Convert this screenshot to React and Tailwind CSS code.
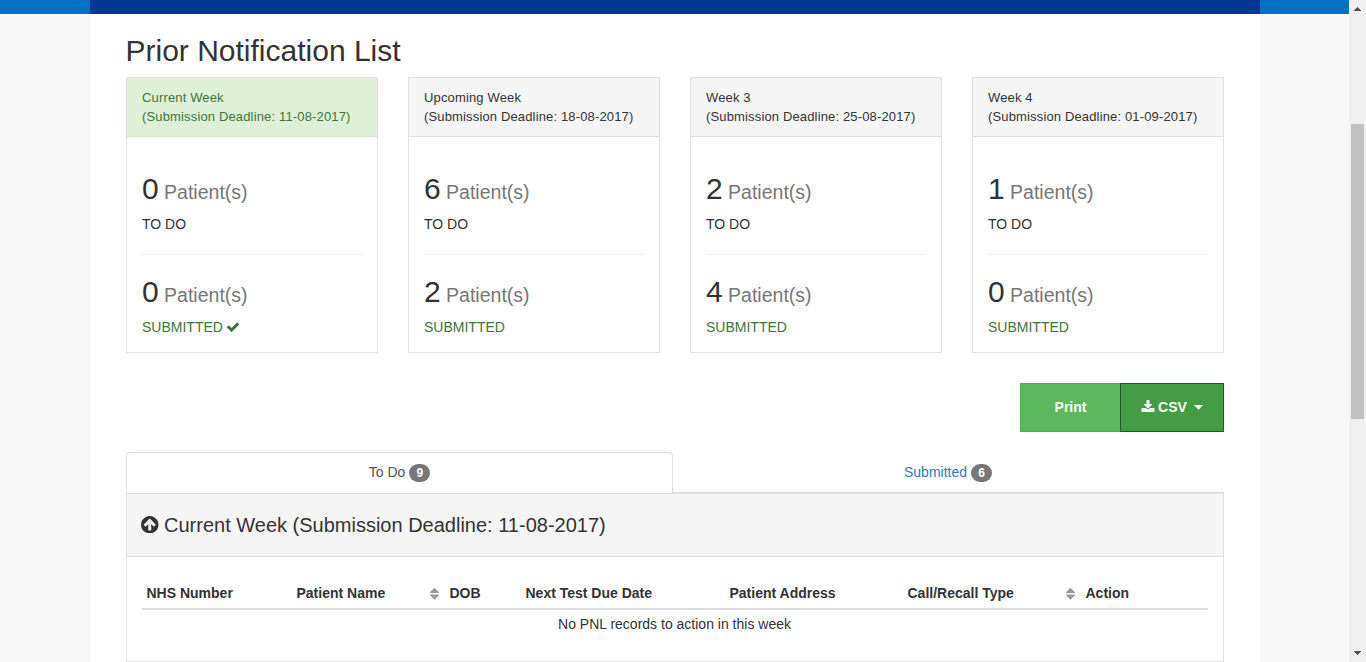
import React from "react";

const weeks = [
  { title: "Current Week", deadline: "11-08-2017", todo: 0, submitted: 0, current: true },
  { title: "Upcoming Week", deadline: "18-08-2017", todo: 6, submitted: 2 },
  { title: "Week 3", deadline: "25-08-2017", todo: 2, submitted: 4 },
  { title: "Week 4", deadline: "01-09-2017", todo: 1, submitted: 0 },
];

function CheckIcon() {
  return (
    <svg className="-ml-[0.5px] size-[14px]" viewBox="0 0 1792 1792" fill="currentColor">
      <path d="M1671 566q0 40-28 68l-724 724-136 136q-28 28-68 28t-68-28l-136-136-362-362q-28-28-28-68t28-68l136-136q28-28 68-28t68 28l294 295 656-657q28-28 68-28t68 28l136 136q28 28 28 68z" />
    </svg>
  );
}

function DownloadIcon() {
  return (
    <svg className="mr-[3px] size-[14px]" viewBox="0 0 1792 1792" fill="currentColor">
      <path d="M1344 1344q0-26-19-45t-45-19-45 19-19 45 19 45 45 19 45-19 19-45zm256 0q0-26-19-45t-45-19-45 19-19 45 19 45 45 19 45-19 19-45zm128-224v320q0 40-28 68t-68 28h-1472q-40 0-68-28t-28-68v-320q0-40 28-68t68-28h465l135 136q58 56 136 56t136-56l136-136h464q40 0 68 28t28 68zm-325-569q17 41-14 70l-448 448q-18 19-45 19t-45-19l-448-448q-31-29-14-70 17-39 59-39h256v-448q0-26 19-45t45-19h256q26 0 45 19t19 45v448h256q42 0 59 39z" />
    </svg>
  );
}

function ArrowCircleUpIcon() {
  return (
    <svg className="-ml-[0.75px] mr-[5.25px] size-[17.5px]" viewBox="128 128 1536 1536" fill="currentColor">
      <path d="M1412 895q0-27-18-45l-362-362-91-91q-18-18-45-18t-45 18l-91 91-362 362q-18 18-18 45t18 45l91 91q18 18 45 18t45-18l189-189v502q0 26 19 45t45 19h128q26 0 45-19t19-45v-502l189 189q19 19 45 19t45-19l91-91q18-18 18-45zm252 1q0 209-103 385.5t-279.5 279.5-385.5 103-385.5-103-279.5-279.5-103-385.5 103-385.5 279.5-279.5 385.5-103 385.5 103 279.5 279.5 103 385.5z" />
    </svg>
  );
}

function SortIcon() {
  return (
    <svg className="mr-[11px] h-[13px] w-[9px]" viewBox="0 0 9 13" fill="#999">
      <path d="M4.5 .8 9 5.3V6H0V5.3ZM0 7.5H9V8.3L4.5 12.8 0 8.3Z" />
    </svg>
  );
}

function Count({ value }) {
  return (
    <h2 className="h-8 text-[30px] leading-[33px] whitespace-pre">
      {value}
      <small className="text-[19.5px] text-[#777]"> Patient(s)</small>
    </h2>
  );
}

function WeekCard({ week }) {
  return (
    <section className="border border-[#e1e1e1]">
      <header
        className={
          week.current
            ? "h-[59px] border-b border-[#d0e9c6] bg-[#dff0d8] px-[15px] py-[10px] text-[13px] leading-[19px] tracking-[0.15px] text-[#3c763d]"
            : "h-[59px] border-b border-[#ddd] bg-[#f5f5f5] px-[15px] py-[10px] text-[13px] leading-[19px] tracking-[0.15px]"
        }
      >
        <div>{week.title}</div>
        <div className="whitespace-nowrap">(Submission Deadline: {week.deadline})</div>
      </header>
      <div className="px-[15px] pt-[35px] pb-[15px]">
        <Count value={week.todo} />
        <p className="mt-[10px] leading-5">TO DO</p>
        <hr className="my-5 border-t border-[#eee]" />
        <Count value={week.submitted} />
        <p className="mt-[10px] flex items-center gap-1 leading-5 text-[#3c763d]">
          SUBMITTED
          {week.current && <CheckIcon />}
        </p>
      </div>
    </section>
  );
}

function Badge({ value }) {
  return (
    <span className="mt-[2px] h-[18px] w-[21px] rounded-full bg-[#777] text-center text-xs leading-[18px] font-bold text-white">
      {value}
    </span>
  );
}

const columns = [
  { label: "NHS Number", width: "w-[150px]" },
  { label: "Patient Name", width: "w-[153px]", sort: true },
  { label: "DOB", width: "w-[76px]" },
  { label: "Next Test Due Date", width: "w-[204px]" },
  { label: "Patient Address", width: "w-[178px]" },
  { label: "Call/Recall Type", width: "w-[178px]", sort: true },
  { label: "Action", width: "flex-1" },
];

function Scrollbar() {
  return (
    <div className="flex w-[17px] flex-col items-center bg-[#f0f0f0]">
      <svg className="mt-[7px] h-1 w-[7px]" viewBox="0 0 7 4" fill="#505050" shapeRendering="crispEdges">
        <path d="M3 0h1v1h1v1h1v1h1v1H0V3h1V2h1V1h1z" />
      </svg>
      <div className="mt-[113px] h-[295px] w-[13px] bg-[#c1c1c1]" />
      <svg className="mt-auto mb-[7px] h-1 w-[7px]" viewBox="0 0 7 4" fill="#505050" shapeRendering="crispEdges">
        <path d="M0 0h7v1H6v1H5v1H4v1H3V3H2V2H1V1H0z" />
      </svg>
    </div>
  );
}

export default function App() {
  return (
    <div className="flex h-[662px] overflow-hidden bg-[#f8f8f8] font-['Liberation_Sans',Arial,sans-serif] text-sm text-[#333]">
      <div className="flex flex-1 flex-col">
        <div className="h-[14px] bg-[#0072c6] pr-[89px] pl-[90px]">
          <div className="h-full bg-[#003893]" />
        </div>
        <main className="mr-[89px] ml-[90px] flex-1 bg-white px-9 pt-5">
          <h1 className="-ml-[0.5px] h-[43px] text-[30px] leading-[33px]">Prior Notification List</h1>

          <div className="grid grid-cols-4 gap-[30px]">
            {weeks.map((week) => (
              <WeekCard key={week.title} week={week} />
            ))}
          </div>

          <div className="mt-[30px] flex h-[49px] justify-end font-bold text-white">
            <button className="w-[100px] border border-r-0 border-[#4cae4c] bg-[#5cb85c] pb-[2px]">Print</button>
            <button className="flex w-[104px] items-center justify-center border border-[#255625] bg-[#449d44] pb-px">
              <DownloadIcon />
              <span className="-mt-px">CSV</span>
              <svg className="ml-[7px] h-[5px] w-[9px]" viewBox="0 0 9 5" fill="currentColor">
                <path d="M0 0h9L4.5 4.8z" />
              </svg>
            </button>
          </div>

          <div className="mt-5 flex h-[41px]">
            <div className="flex w-[547px] justify-center gap-1 rounded-t border border-b-0 border-[#ddd] pt-[9px] leading-5 text-[#555]">
              <span>To Do</span>
              <Badge value={9} />
            </div>
            <div className="flex flex-1 justify-center gap-1 border-b border-[#ddd] pt-[10px] pr-px leading-5 text-[#337ab7]">
              <span>Submitted</span>
              <Badge value={6} />
            </div>
          </div>

          <section className="h-[169px] border border-[#e1e1e1]">
            <header className="flex h-[63px] items-center border-b border-[#ddd] bg-[#f5f5f5] px-[15px] pb-px text-xl">
              <ArrowCircleUpIcon />
              <h3>Current Week (Submission Deadline: 11-08-2017)</h3>
            </header>
            <div className="px-[15px] pt-[21px]">
              <div className="flex h-8 border-b-2 border-[#ddd] pl-[4.5px] leading-[31px] font-bold">
                {columns.map((c) => (
                  <div key={c.label} className={`flex items-center justify-between ${c.width}`}>
                    <span className="whitespace-nowrap">{c.label}</span>
                    {c.sort && <SortIcon />}
                  </div>
                ))}
              </div>
              <p className="pt-1 pr-px text-center leading-5">No PNL records to action in this week</p>
            </div>
          </section>
        </main>
      </div>
      <Scrollbar />
    </div>
  );
}
